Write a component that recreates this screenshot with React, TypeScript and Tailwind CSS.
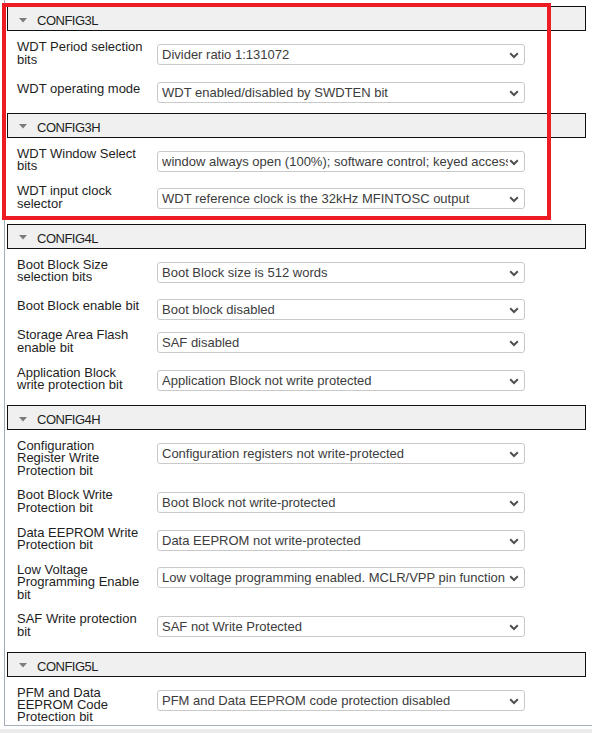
import React from "react";

type Row = { label: string[]; value: string };
type Section = { title: string; rows: Row[] };

const sections: Section[] = [
  {
    title: "CONFIG3L",
    rows: [
      { label: ["WDT Period selection", "bits"], value: "Divider ratio 1:131072" },
      { label: ["WDT operating mode"], value: "WDT enabled/disabled by SWDTEN bit" },
    ],
  },
  {
    title: "CONFIG3H",
    rows: [
      {
        label: ["WDT Window Select", "bits"],
        value: "window always open (100%); software control; keyed access not required",
      },
      {
        label: ["WDT input clock", "selector"],
        value: "WDT reference clock is the 32kHz MFINTOSC output",
      },
    ],
  },
  {
    title: "CONFIG4L",
    rows: [
      { label: ["Boot Block Size", "selection bits"], value: "Boot Block size is 512 words" },
      { label: ["Boot Block enable bit"], value: "Boot block disabled" },
      { label: ["Storage Area Flash", "enable bit"], value: "SAF disabled" },
      {
        label: ["Application Block", "write protection bit"],
        value: "Application Block not write protected",
      },
    ],
  },
  {
    title: "CONFIG4H",
    rows: [
      {
        label: ["Configuration", "Register Write", "Protection bit"],
        value: "Configuration registers not write-protected",
      },
      { label: ["Boot Block Write", "Protection bit"], value: "Boot Block not write-protected" },
      { label: ["Data EEPROM Write", "Protection bit"], value: "Data EEPROM not write-protected" },
      {
        label: ["Low Voltage", "Programming Enable", "bit"],
        value:
          "Low voltage programming enabled. MCLR/VPP pin function is MCLR. MCLRE configuration bit is ignored",
      },
      { label: ["SAF Write protection", "bit"], value: "SAF not Write Protected" },
    ],
  },
  {
    title: "CONFIG5L",
    rows: [
      {
        label: ["PFM and Data", "EEPROM Code", "Protection bit"],
        value: "PFM and Data EEPROM code protection disabled",
      },
    ],
  },
];

function Chevron() {
  return (
    <svg
      width="10"
      height="7"
      viewBox="0 0 10 7"
      className="absolute right-[5px] top-[7px]"
    >
      <path d="M1.2 1.3 L5 5 L8.8 1.3" stroke="#505050" strokeWidth="2" fill="none" />
    </svg>
  );
}

function Select({ value }: { value: string }) {
  return (
    <div className="relative mt-[9px] h-[21px] w-[368px] shrink-0 self-start rounded-[3px] border border-[#c9c9c9] bg-white">
      <div className="ml-[4px] mr-[16px] h-[19px] overflow-hidden whitespace-nowrap pt-[1px] text-[13px] leading-[18px] text-[#3c3c3c]">
        {value}
      </div>
      <Chevron />
    </div>
  );
}

function RowView({ row }: { row: Row }) {
  const h =
    row.label.length === 1 ? "h-[33px]" : row.label.length === 2 ? "h-[37.5px]" : "h-[49px]";
  return (
    <div className={`flex ${h}`}>
      <div className="w-[152px] shrink-0 self-center whitespace-nowrap pl-[12px] text-[13px] leading-[12.3px] text-[#1e1e1e]">
        {row.label.map((l, i) => (
          <div key={i}>{l}</div>
        ))}
      </div>
      <Select value={row.value} />
    </div>
  );
}

function Header({ title }: { title: string }) {
  return (
    <div className="ml-[2px] box-border flex h-[25px] w-[579px] items-center border border-[#111] bg-[#f0f0f0] pl-[11px] pt-[4px]">
      <svg width="8" height="5" viewBox="0 0 8 5" className="mb-[1px]">
        <polygon points="0,0 8,0 4,4.5" fill="#7b7b7b" />
      </svg>
      <span className="ml-[10px] text-[13px] leading-[13px] tracking-[-0.5px] text-[#1e1e1e]">
        {title}
      </span>
    </div>
  );
}

export default function App() {
  return (
    <div
      className="relative h-[733px] w-[592px] overflow-hidden bg-white"
      style={{ fontFamily: '"Liberation Sans", Arial, sans-serif' }}
    >
      <div className="ml-[4px] box-border h-[726px] overflow-hidden border-b border-l border-[#a3aebb] pt-[6px]">
        {sections.map((s) => (
          <div key={s.title}>
            <Header title={s.title} />
            <div className="pb-[7px] pt-[4px]">
              {s.rows.map((r, i) => (
                <RowView key={i} row={r} />
              ))}
            </div>
          </div>
        ))}
      </div>
      <div className="h-[3px] bg-white" />
      <div className="h-[4px] bg-[#ececec]" />
      <div className="pointer-events-none absolute left-[2px] top-[3px] box-border h-[217px] w-[549px] border-4 border-[#ed1c24]" />
    </div>
  );
}
